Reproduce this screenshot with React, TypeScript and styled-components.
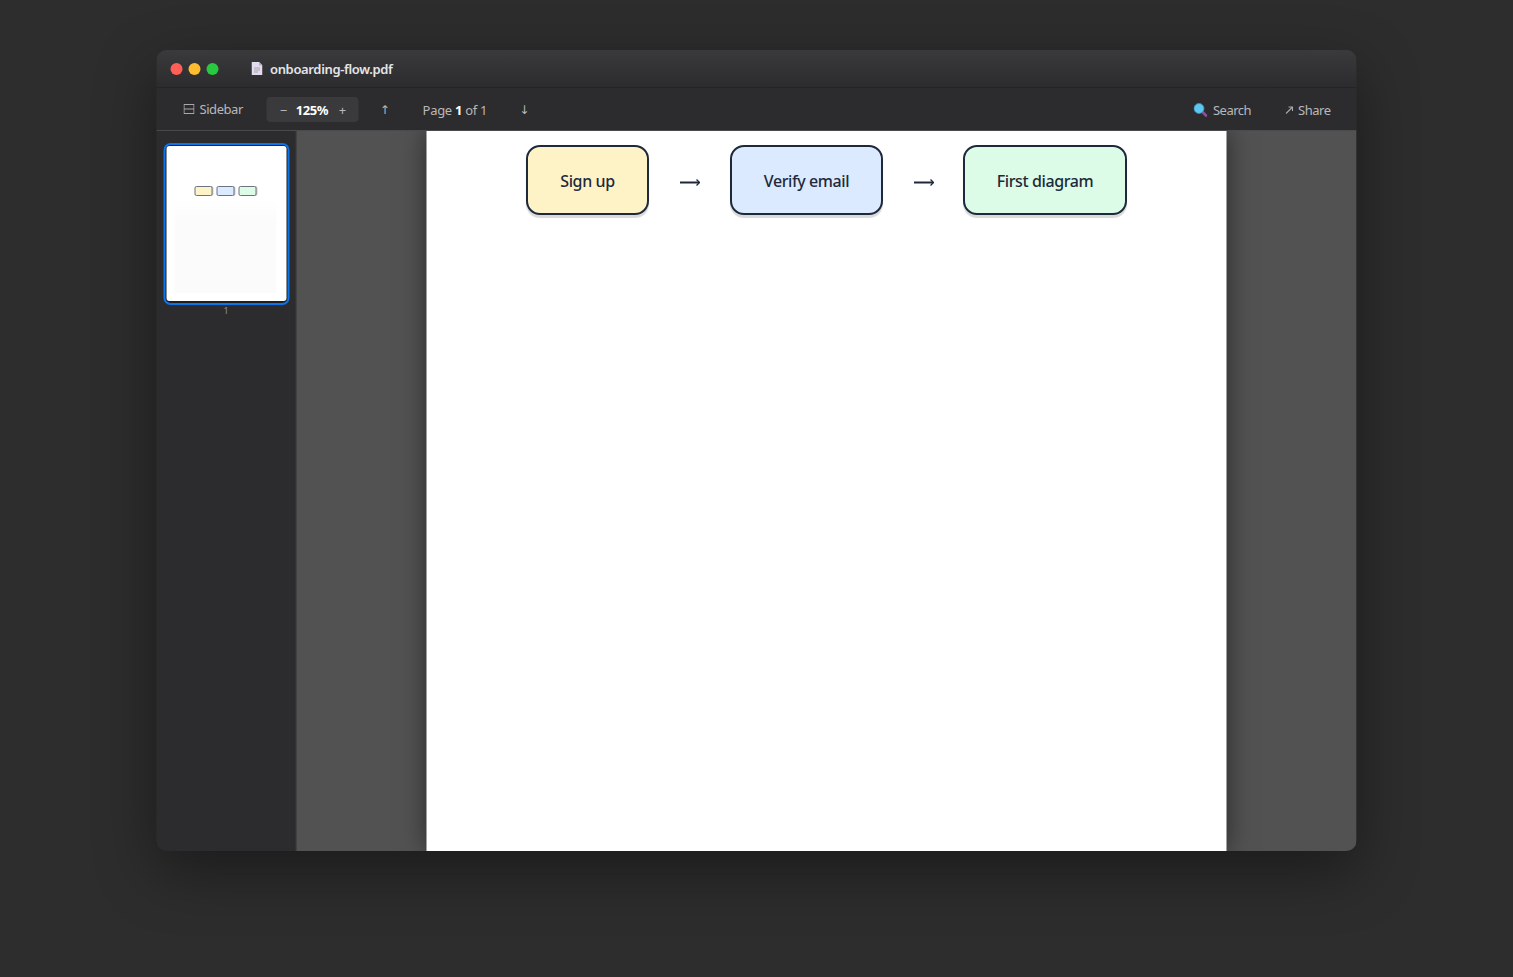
import React from "react";
import styled, { createGlobalStyle } from "styled-components";

const Global = createGlobalStyle`
  html, body { margin: 0; padding: 0; background: #2d2d2d; height: 100%; }
  body { font-family: "Noto Sans", "Open Sans", "Liberation Sans", sans-serif; overflow: hidden; }
`;

const Stage = styled.div`
  padding-top: 50px;
`;

const Window = styled.div`
  width: 1200px;
  height: 801px;
  margin-left: 756px;
  transform: translateX(-599.5px);
  border-radius: 10px;
  overflow: hidden;
  background: #2c2c2e;
  display: flex;
  flex-direction: column;
  box-shadow: 0 20px 60px rgba(0, 0, 0, 0.4);
`;

const TitleBar = styled.div`
  height: 37px;
  flex: none;
  display: flex;
  align-items: center;
  padding: 0 14px;
  background: linear-gradient(to bottom, #3a3a3c, #2c2c2e);
  border-bottom: 1px solid #242426;
`;

const Lights = styled.div`
  display: flex;
  gap: 6px;
  margin-right: 33px;
`;

const Light = styled.span<{ $c: string }>`
  width: 12px;
  height: 12px;
  border-radius: 50%;
  background: ${(p) => p.$c};
`;

const FileName = styled.div`
  display: flex;
  align-items: center;
  gap: 7.5px;
  font-size: 13px;
  font-weight: 600;
  letter-spacing: -0.35px;
  color: #e5e5e7;
`;

const Toolbar = styled.div`
  height: 43px;
  flex: none;
  box-sizing: border-box;
  padding: 2px 26px 0 27px;
  display: flex;
  align-items: center;
  background: #2c2c2e;
  border-bottom: 1px solid #4a4a4c;
  color: #b8b8bc;
  font-size: 13px;
  letter-spacing: -0.3px;
`;

const SidebarToggle = styled.div`
  display: flex;
  align-items: center;
  gap: 5px;
  margin-right: 24px;
  position: relative;
  top: -1px;
  letter-spacing: -0.45px;
`;

const Zoom = styled.div`
  width: 92px;
  height: 25px;
  box-sizing: border-box;
  margin-top: -1px;
  padding: 0 13px;
  border-radius: 4px;
  background: #3a3a3c;
  display: flex;
  align-items: center;
  justify-content: space-between;
`;

const ZoomValue = styled.b`
  color: #ffffff;
  font-weight: 700;
  letter-spacing: -0.45px;
  margin-right: 2px;
`;

const NavArrow = styled.span<{ $ml: number }>`
  margin-left: ${(p) => p.$ml}px;
  font-family: "DejaVu Sans", sans-serif;
  font-size: 12px;
  color: #b8b8bc;
`;

const PageInfo = styled.span`
  margin-left: 33px;
  & b { color: #fff; font-weight: 700; }
`;

const Spacer = styled.div`
  flex: 1;
`;

const ToolAction = styled.div<{ $ml?: number; $gap: number }>`
  display: flex;
  align-items: center;
  gap: ${(p) => p.$gap}px;
  margin-left: ${(p) => p.$ml ?? 0}px;
  letter-spacing: -0.5px;
`;

const Content = styled.div`
  flex: 1;
  display: flex;
  min-height: 0;
`;

const Sidebar = styled.aside`
  width: 140px;
  flex: none;
  box-sizing: border-box;
  background: #2c2c2e;
  border-right: 1px solid #3a3a3c;
  padding-top: 12px;
  display: flex;
  flex-direction: column;
  align-items: center;
`;

const Thumb = styled.div`
  width: 126px;
  height: 162px;
  box-sizing: border-box;
  border: 2px solid #0a74e8;
  border-radius: 7px;
  background: #1f1f21;
  padding: 1px 1px 2px;
`;

const ThumbPage = styled.div`
  height: 100%;
  border-radius: 3px;
  background: #ffffff;
  padding: 40px 8px 0;
  box-sizing: border-box;
  display: flex;
  flex-direction: column;
`;

const ThumbRow = styled.div`
  display: flex;
  justify-content: center;
  gap: 4px;
  height: 10px;
  flex: none;
  padding-right: 2px;
`;

const ThumbNode = styled.span<{ $bg: string }>`
  width: 18px;
  box-sizing: border-box;
  background: ${(p) => p.$bg};
  border: 1px solid #6b7280;
  border-radius: 2px;
  box-shadow: 1px 0 0 rgba(0, 0, 0, 0.2);
`;

const ThumbFade = styled.div`
  flex: 1;
  margin: 0 2px 8px 0;
  background: linear-gradient(to bottom, #ffffff, #fbfbfb 30%);
`;

const ThumbLabel = styled.div`
  font-size: 9px;
  line-height: 12px;
  color: #8e8e93;
`;

const Viewer = styled.main`
  flex: 1;
  background: #525252;
  display: flex;
  justify-content: center;
  overflow: hidden;
`;

const Page = styled.section`
  width: 800px;
  background: #fff;
  padding-top: 14px;
  box-sizing: border-box;
  box-shadow: 0 0 24px rgba(0, 0, 0, 0.5);
`;

const Flow = styled.div`
  display: flex;
  justify-content: center;
  align-items: flex-start;
  padding-right: 1px;
  transform: translateX(0.5px);
  color: #1e293b;
`;

const Node = styled.div<{ $bg: string; $w: number }>`
  width: ${(p) => p.$w}px;
  height: 70px;
  box-sizing: border-box;
  background: ${(p) => p.$bg};
  border: 2px solid #1e293b;
  border-radius: 14px;
  box-shadow: 0 3px 1px rgba(0, 0, 0, 0.15);
  display: flex;
  align-items: center;
  justify-content: center;
  font-size: 16px;
  font-weight: 500;
  letter-spacing: -0.4px;
  & > span { position: relative; top: 1px; }
`;

const ArrowBox = styled.div<{ $l: number; $r: number }>`
  margin: 32px ${(p) => p.$r}px 0 ${(p) => p.$l}px;
  height: 10px;
  flex: none;
  & > svg { display: block; }
`;

const FlowArrow = () => (
  <svg width="20" height="10" viewBox="0 0 20 10" fill="none" stroke="#1e293b">
    <path d="M0 5.5h19" strokeWidth="2" />
    <path d="M16.5 2.5 19.5 5.5 16.5 8.5" strokeWidth="1.3" />
  </svg>
);

const App = () => (
  <>
    <Global />
    <Stage>
      <Window>
        <TitleBar>
          <Lights>
            <Light $c="#ff5f57" />
            <Light $c="#febc2e" />
            <Light $c="#28c840" />
          </Lights>
          <FileName>
            <svg width="11" height="13" viewBox="0 0 11 13">
              <path d="M0 0h7.5L11 3.5V13H0z" fill="#e4dcec" />
              <path d="M7.5 0 11 3.5H7.5z" fill="#b9b0c4" />
              <path d="M2.5 6h6M2.5 8h6M2.5 10h4" stroke="#a9a3b2" strokeWidth="1" />
            </svg>
            onboarding-flow.pdf
          </FileName>
        </TitleBar>
        <Toolbar>
          <SidebarToggle>
            <svg width="11" height="10" viewBox="0 0 11 10" fill="none" stroke="#a8a8ac">
              <rect x="0.5" y="0.5" width="10" height="9" />
              <path d="M0.5 5h10" />
            </svg>
            Sidebar
          </SidebarToggle>
          <Zoom>
            <span>−</span>
            <ZoomValue>125%</ZoomValue>
            <span>+</span>
          </Zoom>
          <NavArrow $ml={21}>↑</NavArrow>
          <PageInfo>
            Page <b>1</b> of 1
          </PageInfo>
          <NavArrow $ml={32}>↓</NavArrow>
          <Spacer />
          <ToolAction $gap={5}>
            <svg width="14" height="14" viewBox="0 0 14 14">
              <path d="M8.5 8.5 12.5 12.5" stroke="#8e4f9e" strokeWidth="2.6" strokeLinecap="round" />
              <circle cx="5.5" cy="5.5" r="5" fill="#5cc8f0" stroke="#3f8fb8" strokeWidth="0.8" />
            </svg>
            Search
          </ToolAction>
          <ToolAction $ml={34} $gap={5}>
            <svg width="8" height="8" viewBox="0 0 8 8" fill="none" stroke="#a8a8ac" strokeWidth="1.1">
              <path d="M0.5 7.5 7 1M3 1h4v4" />
            </svg>
            Share
          </ToolAction>
        </Toolbar>
        <Content>
          <Sidebar>
            <Thumb>
              <ThumbPage>
                <ThumbRow>
                  <ThumbNode $bg="#fef3c7" />
                  <ThumbNode $bg="#dbeafe" />
                  <ThumbNode $bg="#dcfce7" />
                </ThumbRow>
                <ThumbFade />
              </ThumbPage>
            </Thumb>
            <ThumbLabel>1</ThumbLabel>
          </Sidebar>
          <Viewer>
            <Page>
              <Flow>
                <Node $bg="#fef3c7" $w={123}><span>Sign up</span></Node>
                <ArrowBox $l={31} $r={30}><FlowArrow /></ArrowBox>
                <Node $bg="#dbeafe" $w={153}><span>Verify email</span></Node>
                <ArrowBox $l={31} $r={29}><FlowArrow /></ArrowBox>
                <Node $bg="#dcfce7" $w={164}><span>First diagram</span></Node>
              </Flow>
            </Page>
          </Viewer>
        </Content>
      </Window>
    </Stage>
  </>
);

export default App;
